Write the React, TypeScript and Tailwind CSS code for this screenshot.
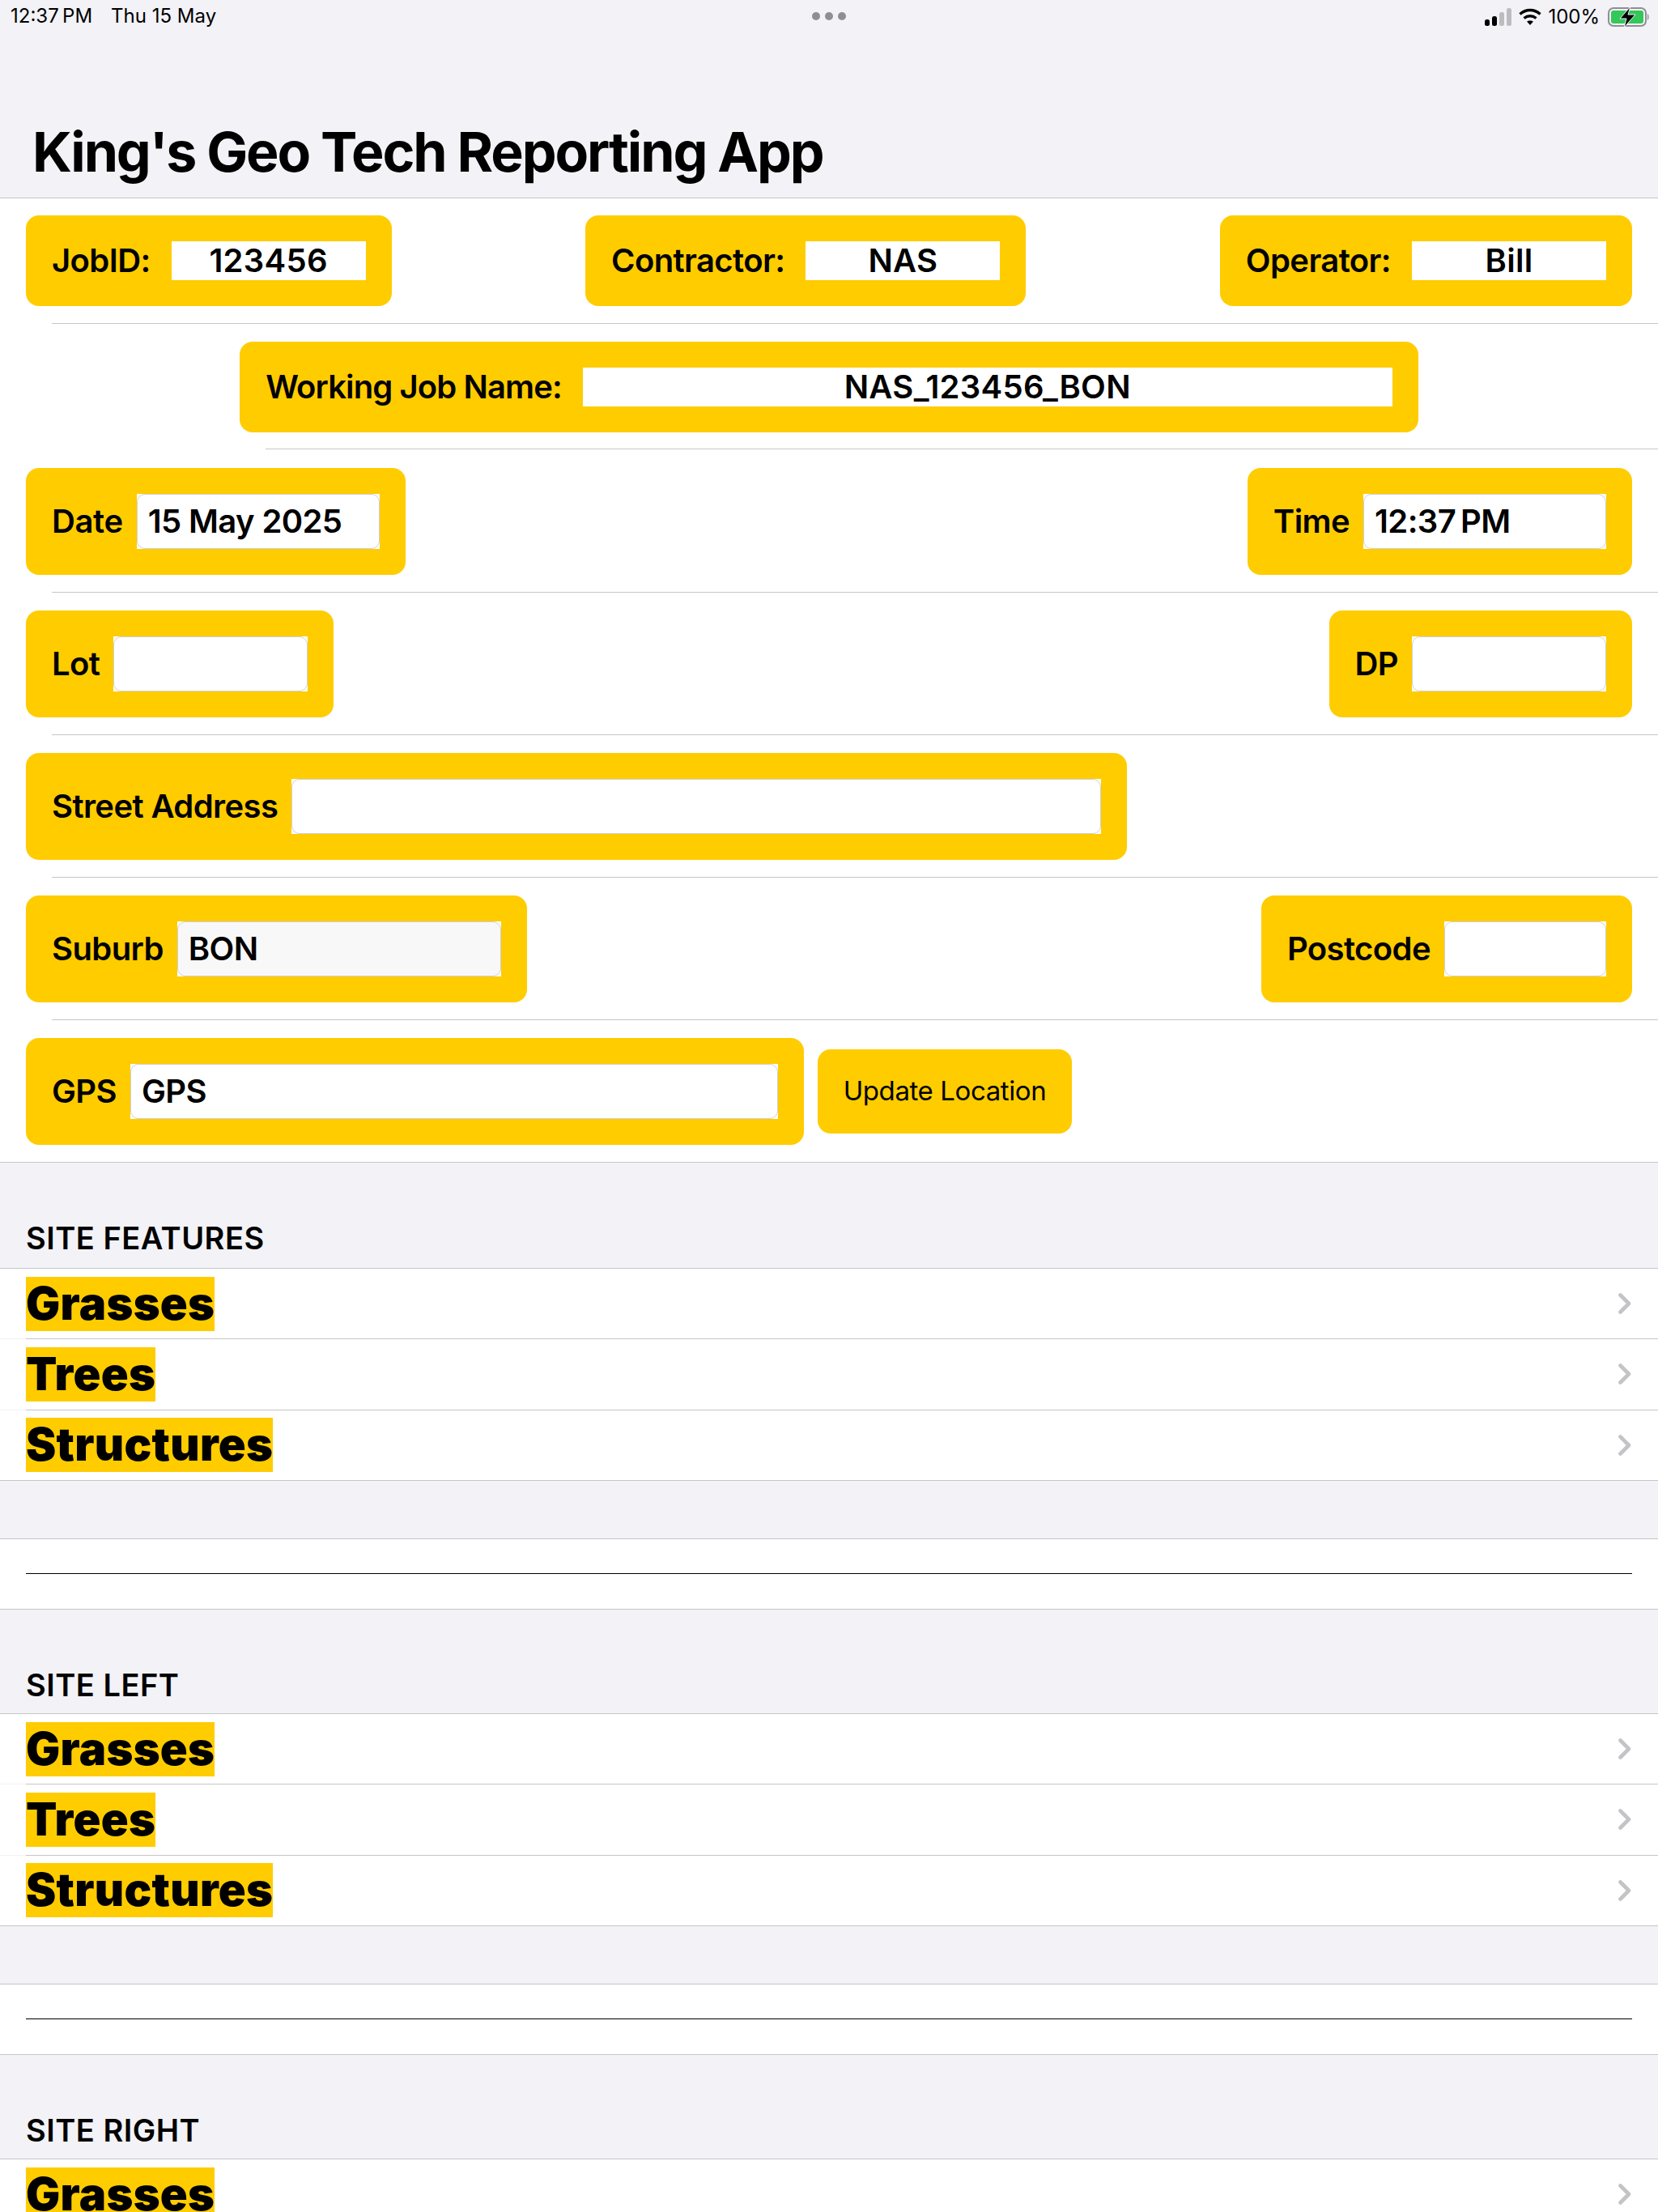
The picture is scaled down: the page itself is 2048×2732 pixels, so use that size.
import React from 'react';

const font = { fontFamily: 'Inter, "Liberation Sans", sans-serif' };

const Divider = ({ inset = 'ml-16' }: { inset?: string }) => <div className={`h-px bg-[#c6c6c8] ${inset}`} />;

const Field = ({ label, value, inputW, bordered = true, labelTracking = 'tracking-[-0.6px]', bg = 'bg-white' }: {
  label: string;
  value?: string;
  inputW: string;
  bordered?: boolean;
  labelTracking?: string;
  bg?: string;
}) => (
  <div className={`flex items-center rounded-2xl bg-[#ffcc00] px-8 ${bordered ? 'h-[132px] gap-[17px]' : 'h-[112px] gap-[26px]'}`}>
    <span className={`whitespace-nowrap text-[40px] font-semibold leading-none text-black ${labelTracking}`}>{label}</span>
    {bordered ? (
      <div className={`${inputW} h-[68px] bg-white`}>
        <div className={`flex h-full items-center rounded-[10px] border border-[#cfcfd2] px-[13px] text-[40px] font-semibold tracking-[-0.6px] text-black ${bg}`}>{value}</div>
      </div>
    ) : (
      <div className={`${inputW} flex h-12 items-center justify-center bg-white text-[40px] font-semibold tracking-[0.3px] text-black`}>{value}</div>
    )}
  </div>
);

const Chevron = () => (
  <svg width="16" height="26" viewBox="0 0 16 26" fill="none" className="shrink-0">
    <path d="M2.5 2.5 L13 13 L2.5 23.5" stroke="#c4c4c7" strokeWidth="4.6" strokeLinecap="round" strokeLinejoin="round" />
  </svg>
);

const ListRow = ({ label, last }: { label: string; last?: boolean }) => (
  <>
    <div className="flex h-[86.33px] items-center justify-between bg-white pl-8 pr-[33px]">
      <span className="h-[67px] bg-[#ffcc00] text-[56px] font-black leading-[67px] tracking-[0.3px] text-black">{label}</span>
      <Chevron />
    </div>
    <Divider inset={last ? '' : 'ml-8'} />
  </>
);

const Section = ({ title, head }: { title: string; head: string }) => (
  <section>
    <div className={`flex items-end bg-[#f2f2f7] px-8 ${head}`}>
      <h2 className="text-[38px] font-semibold leading-none tracking-[0.5px] text-black">{title}</h2>
    </div>
    <Divider inset="" />
    <ListRow label="Grasses" />
    <ListRow label="Trees" />
    <ListRow label="Structures" last />
    <div className="h-[71px] bg-[#f2f2f7]" />
    <Divider inset="" />
    <div className="flex h-[86px] items-center bg-white px-8">
      <div className="h-px w-full bg-black" />
    </div>
    <Divider inset="" />
  </section>
);

const StatusBar = () => (
  <div className="relative h-10 text-[24px] leading-none text-black">
    <div className="absolute left-[13px] top-2 flex gap-[23px]">
      <span>12:37{'\u202f'}PM</span>
      <span>Thu 15 May</span>
    </div>
    <div className="absolute left-[1003px] top-[15px] flex gap-[6px]">
      <span className="h-[10px] w-[10px] rounded-full bg-[#8e8e93]" />
      <span className="h-[10px] w-[10px] rounded-full bg-[#8e8e93]" />
      <span className="h-[10px] w-[10px] rounded-full bg-[#8e8e93]" />
    </div>
    <div className="absolute right-[10px] top-[8px] flex items-center">
      <svg width="34" height="22" viewBox="0 0 34 22" className="mr-2">
        <rect x="0" y="14" width="6" height="8" rx="2.5" fill="#000" />
        <rect x="9" y="10" width="6" height="12" rx="2.5" fill="#000" />
        <rect x="18" y="5" width="6" height="17" rx="2.5" fill="#bcbcc0" />
        <rect x="27" y="0" width="6" height="22" rx="2.5" fill="#bcbcc0" />
      </svg>
      <svg width="28" height="22" viewBox="0 0 28 22" className="mr-2">
        <path d="M1.5 7.5 C9 0.8 19 0.8 26.5 7.5" fill="none" stroke="#000" strokeWidth="3.4" />
        <path d="M6.5 12.5 C11 8.8 17 8.8 21.5 12.5" fill="none" stroke="#000" strokeWidth="3.4" />
        <path d="M10 16.5 C12 15 16 15 18 16.5 L14 21 Z" fill="#000" />
      </svg>
      <span className="mr-[10px]">100%</span>
      <svg width="52" height="26" viewBox="0 0 52 26">
        <rect x="1" y="2" width="46" height="22" rx="6" fill="none" stroke="#8e8e93" strokeWidth="2" />
        <rect x="4" y="5" width="40" height="16" rx="3" fill="#34c759" />
        <path d="M49 9 C51 10 51 16 49 17 Z" fill="#8e8e93" />
        <path d="M28 0 L15 15 H23 L20 26 L34 10 H25 Z" fill="#000" stroke="#f2f2f7" strokeWidth="1" />
      </svg>
    </div>
  </div>
);

export default function App() {
  return (
    <div style={font} className="h-[2732px] w-[2048px] overflow-hidden bg-[#f2f2f7]">
      <header className="h-[244px]">
        <StatusBar />
        <h1 className="pl-10 pt-[105px] text-[68px] font-bold leading-[84px] tracking-[-2.1px] text-black">King's Geo Tech Reporting App</h1>
      </header>
      <Divider inset="" />

      <main className="bg-white">
        <div className="flex h-[154px] items-center justify-between px-8">
          <Field label="JobID:" value="123456" inputW="w-[240px]" bordered={false} />
          <Field label="Contractor:" value="NAS" inputW="w-[240px]" bordered={false} />
          <Field label="Operator:" value="Bill" inputW="w-[240px]" bordered={false} />
        </div>
        <Divider />
        <div className="flex h-[154px] items-center justify-center pt-px">
          <Field label="Working Job Name:" value="NAS_123456_BON" inputW="w-[1000px]" bordered={false} labelTracking="tracking-[-0.9px]" />
        </div>
        <Divider inset="ml-[328px]" />
        <div className="flex h-[176px] items-center justify-between px-8 pt-px">
          <Field label="Date" value="15 May 2025" inputW="w-[300px]" labelTracking="tracking-[-0.4px]" />
          <Field label="Time" value={'12:37\u202fPM'} inputW="w-[300px]" />
        </div>
        <Divider />
        <div className="flex h-[175px] items-center justify-between px-8">
          <Field label="Lot" inputW="w-[240px]" />
          <Field label="DP" inputW="w-[240px]" />
        </div>
        <Divider />
        <div className="flex h-[175px] items-center px-8">
          <Field label="Street Address" inputW="w-[1000px]" />
        </div>
        <Divider />
        <div className="flex h-[175px] items-center justify-between px-8">
          <Field label="Suburb" value="BON" inputW="w-[400px]" bg="bg-[#f8f8f8]" />
          <Field label="Postcode" inputW="w-[200px]" />
        </div>
        <Divider />
        <div className="flex h-[175px] items-center gap-[17px] px-8">
          <Field label="GPS" value="GPS" inputW="w-[800px]" />
          <button className="flex h-[104px] w-[314px] items-center justify-center rounded-2xl bg-[#ffcc00] text-[33px] tracking-[-0.4px] text-black">Update Location</button>
        </div>
      </main>
      <Divider inset="" />

      <Section title="SITE FEATURES" head="h-[130px] pb-[18px]" />
      <Section title="SITE LEFT" head="h-[128px] pb-[16px]" />
      <Section title="SITE RIGHT" head="h-[128px] pb-[16px]" />
    </div>
  );
}
